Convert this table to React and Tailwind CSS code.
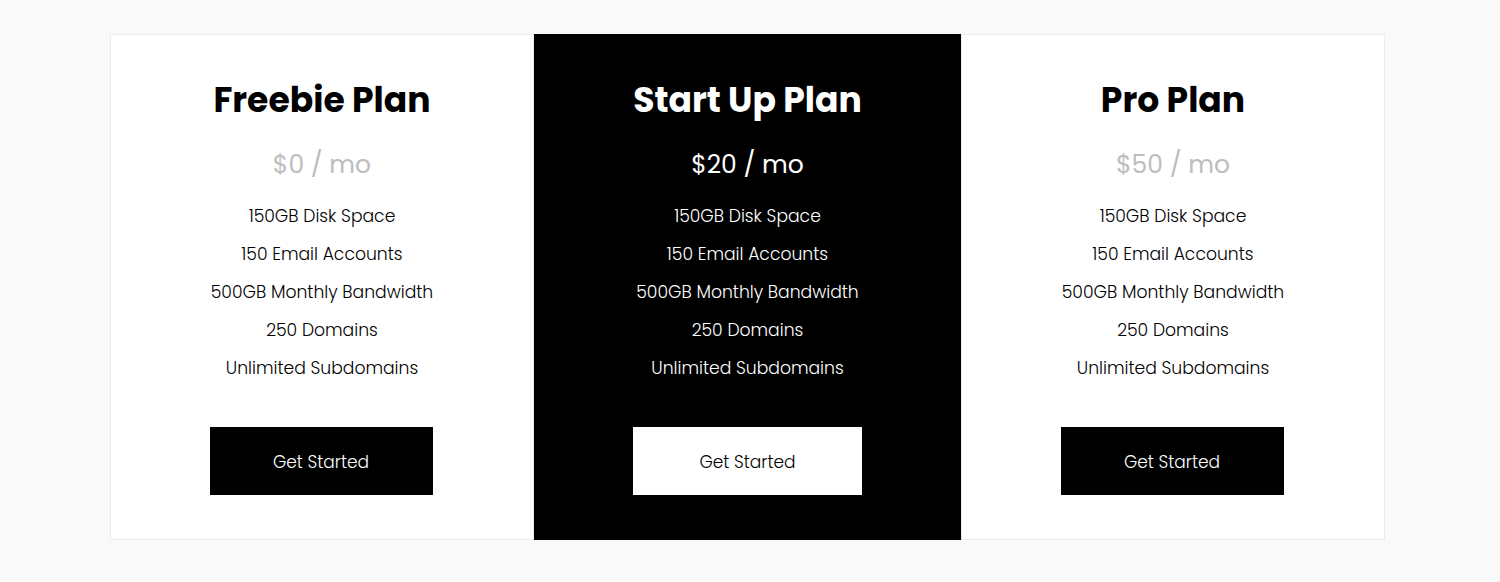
import React from 'react'

const features = [
    "150GB Disk Space",
    "150 Email Accounts",
    "500GB Monthly Bandwidth",
    "250 Domains",
    "Unlimited Subdomains",
]

const plans = [
    { name: "Freebie Plan", price: "$0 / mo", dark: false, width: 'w-[424px]' },
    { name: "Start Up Plan", price: "$20 / mo", dark: true, width: 'w-[427px]' },
    { name: "Pro Plan", price: "$50 / mo", dark: false, width: 'w-[424px]' },
]

const PlanCard = ({ plan }) => {
    const { name, price, dark, width } = plan
    return (
        <div className={dark
            ? `${width} flex flex-col items-center bg-black text-white pt-[45px] pb-[45px]`
            : `${width} flex flex-col items-center bg-white text-black border border-[#ececec] pt-[44px] pb-[44px]`}>
            <h2 className='text-[34.6px] leading-[43px] font-bold'>{name}</h2>
            <p className={dark
                ? 'mt-[23px] text-[25px] leading-[39px] text-white'
                : 'mt-[23px] text-[25px] leading-[39px] text-[#bdbdbd]'}>{price}</p>
            <ul className='mt-[13px] flex flex-col items-center'>
                {features.map((f) => (
                    <li key={f} className='text-[17.2px] leading-[38px] font-light'>{f}</li>
                ))}
            </ul>
            <button className={dark
                ? 'mt-[40px] w-[229px] h-[68px] pt-[4px] bg-white text-black text-[17px] font-light'
                : 'mt-[40px] w-[223px] h-[68px] pt-[4px] mr-[2px] bg-black text-white text-[17px] font-light'}>
                Get Started
            </button>
        </div>
    )
}

const App = () => {
    return (
        <div className='min-h-[582px] bg-[#f9f9f9] pt-[34px] pl-[110px] font-["Poppins","Inter","Noto_Sans",sans-serif]'>
            <div className='flex'>
                {plans.map((p) => <PlanCard key={p.name} plan={p} />)}
            </div>
        </div>
    )
}

export default App
